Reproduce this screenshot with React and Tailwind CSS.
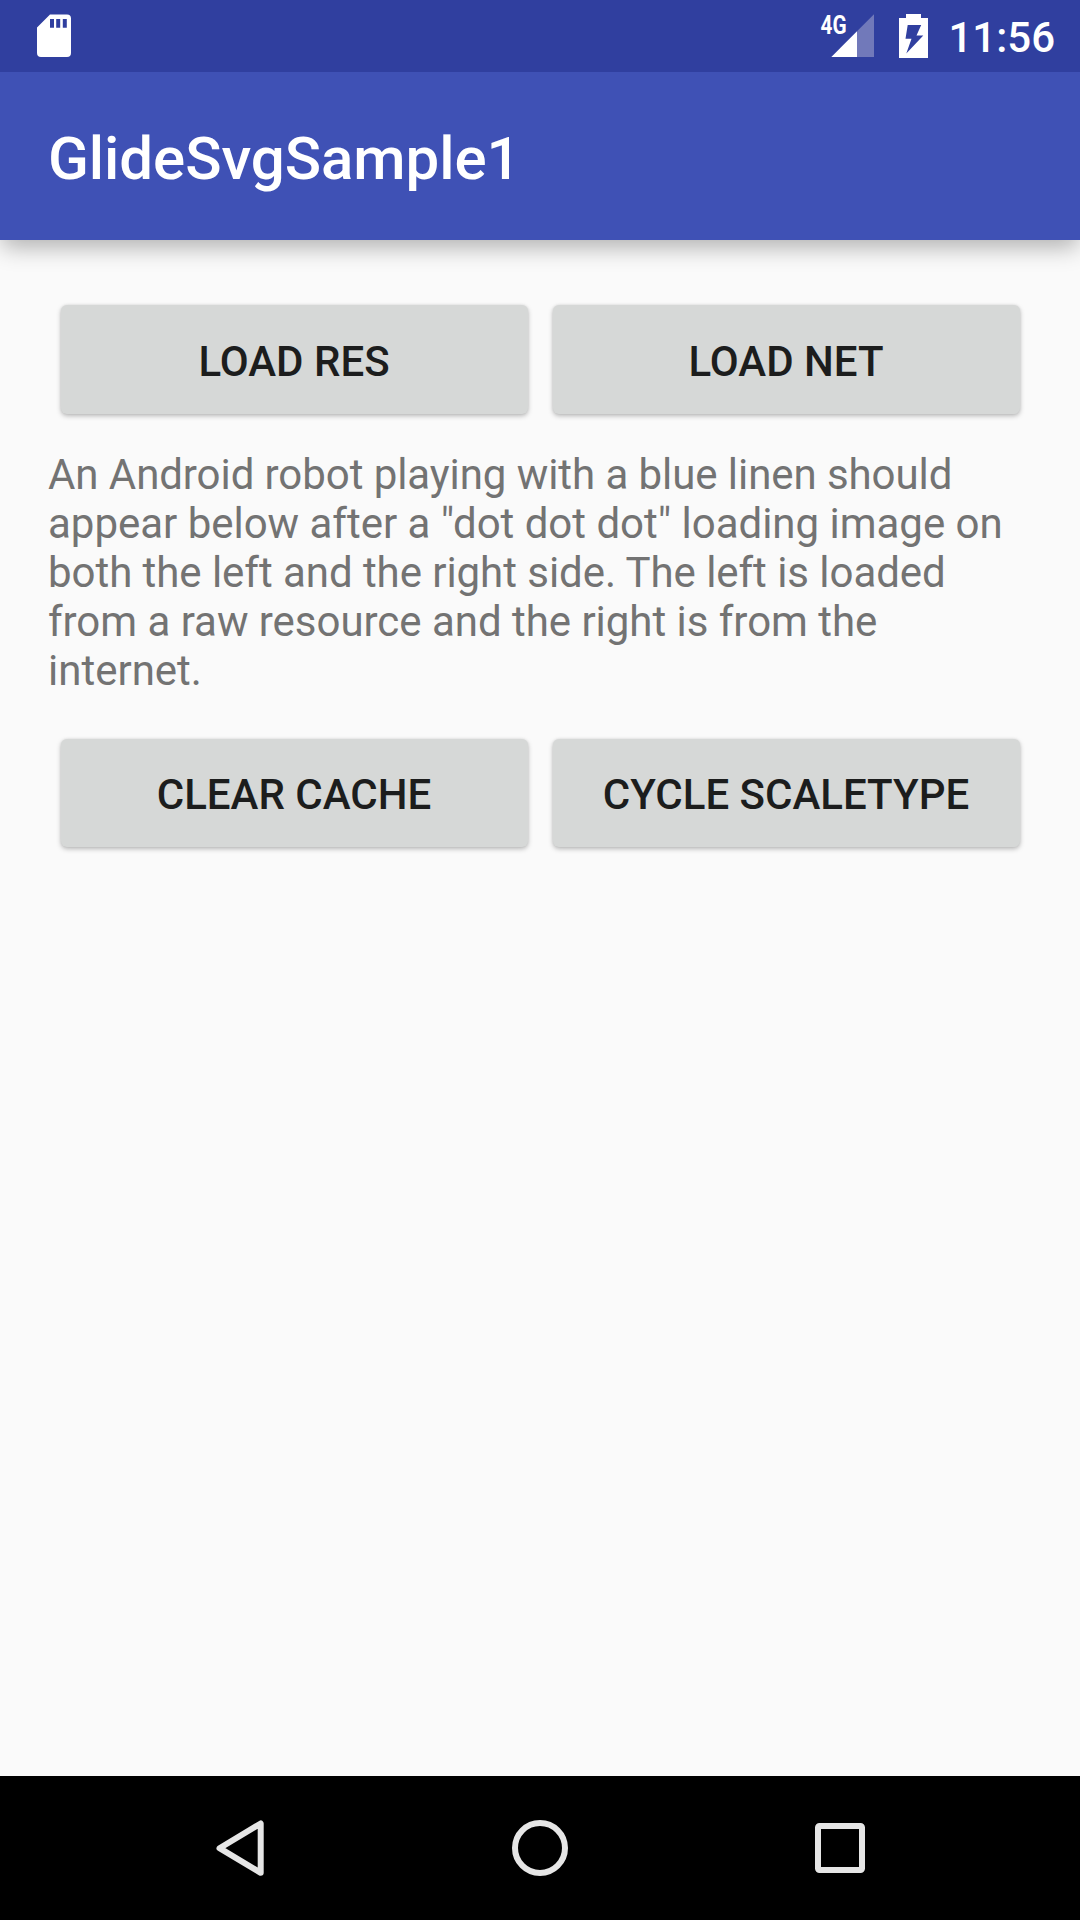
function SdCard() {
  return (
    <svg className="h-[72px] w-[120px]" viewBox="0 0 120 72">
      <path
        fill="#fff"
        fillRule="evenodd"
        d="M50 14.5H67a4 4 0 0 1 4 4V53a4 4 0 0 1-4 4H41a4 4 0 0 1-4-4V27.500ZM50 19V27.700h4V19ZM56.200 19V27.700h4V19ZM62.800 19V27.700h4V19Z"
      />
    </svg>
  );
}

function Signal() {
  return (
    <svg className="h-[72px] w-[60px]" viewBox="0 0 60 72">
      <path fill="#7179ba" d="M54 14.300V57H37V31.300Z" />
      <path fill="#fff" d="M37 31.300V57H11.300Z" />
      <text
        x="0.600"
        y="33.700"
        fill="#fff"
        fontFamily="Roboto, sans-serif"
        fontSize="26"
        fontWeight="700"
        textLength="26"
        lengthAdjust="spacingAndGlyphs"
      >
        4G
      </text>
    </svg>
  );
}

function Battery() {
  return (
    <svg className="h-[72px] w-[29px]" viewBox="0 0 29 72">
      <path
        fill="#fff"
        fillRule="evenodd"
        d="M7 14H22V18H29V58H0V18H7ZM8.700 25 6.500 38.700H12.500L7.300 53.500 24.300 35.500H17.500L22.200 25Z"
      />
    </svg>
  );
}

function Button({ children }) {
  return (
    <button className="flex flex-1 items-center justify-center rounded-[6px] bg-[#d6d8d7] pt-[3px] text-[42px] leading-[49px] font-medium text-[#1c1d1d] shadow-[0_2px_5px_rgba(0,0,0,0.26),0_0_3px_rgba(0,0,0,0.08)]">
      {children}
    </button>
  );
}

export default function App() {
  return (
    <div className="flex h-[1920px] w-[1080px] flex-col overflow-hidden bg-[#fafafa] font-['Roboto',sans-serif]">
      <div className="relative z-10 flex h-[72px] shrink-0 items-center bg-[#303f9f] pr-[25px] text-white">
        <SdCard />
        <div className="ml-auto flex items-center">
          <Signal />
          <div className="ml-[19px]">
            <Battery />
          </div>
          <span className="ml-[20px] pt-[2px] text-[42px] leading-[49px] font-medium">11:56</span>
        </div>
      </div>
      <header className="flex h-[168px] shrink-0 items-center bg-[#3f51b5] px-[48px] pt-[6px] shadow-[0_9px_22px_-2px_rgba(0,0,0,0.3)]">
        <h1 className="text-[60px] leading-[70px] font-medium tracking-[-0.05px] text-white">GlideSvgSample1</h1>
      </header>
      <main className="flex-1 px-[48px] pt-[65px]">
        <div className="flex h-[109px] gap-[25px] px-[12.5px]">
          <Button>LOAD RES</Button>
          <Button>LOAD NET</Button>
        </div>
        <p className="mt-[36px] text-[42px] leading-[49px] whitespace-nowrap text-[#737373]">
          <span className="tracking-[-0.07px]">An Android robot playing with a blue linen should</span>
          <br />
          <span className="tracking-[-0.02px]">appear below after a "dot dot dot" loading image on</span>
          <br />
          <span className="tracking-[-0.05px]">both the left and the right side. The left is loaded</span>
          <br />
          <span className="tracking-[-0.03px]">from a raw resource and the right is from the</span>
          <br />
          internet.
        </p>
        <div className="mt-[44px] flex h-[108px] gap-[25px] px-[12.5px]">
          <Button>CLEAR CACHE</Button>
          <Button>CYCLE SCALETYPE</Button>
        </div>
      </main>
      <nav className="flex h-[144px] shrink-0 items-center justify-center gap-[190px] bg-black">
        <svg className="h-[110px] w-[110px]" viewBox="0 0 110 110" fill="none" stroke="#e6e6e6">
          <path d="M75.700 30.500V79.800L34.500 55.200Z" strokeWidth="6" strokeLinejoin="round" />
        </svg>
        <svg className="h-[110px] w-[110px]" viewBox="0 0 110 110" fill="none" stroke="#e6e6e6">
          <circle cx="55" cy="55" r="25" strokeWidth="6" />
        </svg>
        <svg className="h-[110px] w-[110px]" viewBox="0 0 110 110" fill="none" stroke="#e6e6e6">
          <rect x="33" y="33" width="44" height="44" rx="1.500" strokeWidth="6" />
        </svg>
      </nav>
    </div>
  );
}
